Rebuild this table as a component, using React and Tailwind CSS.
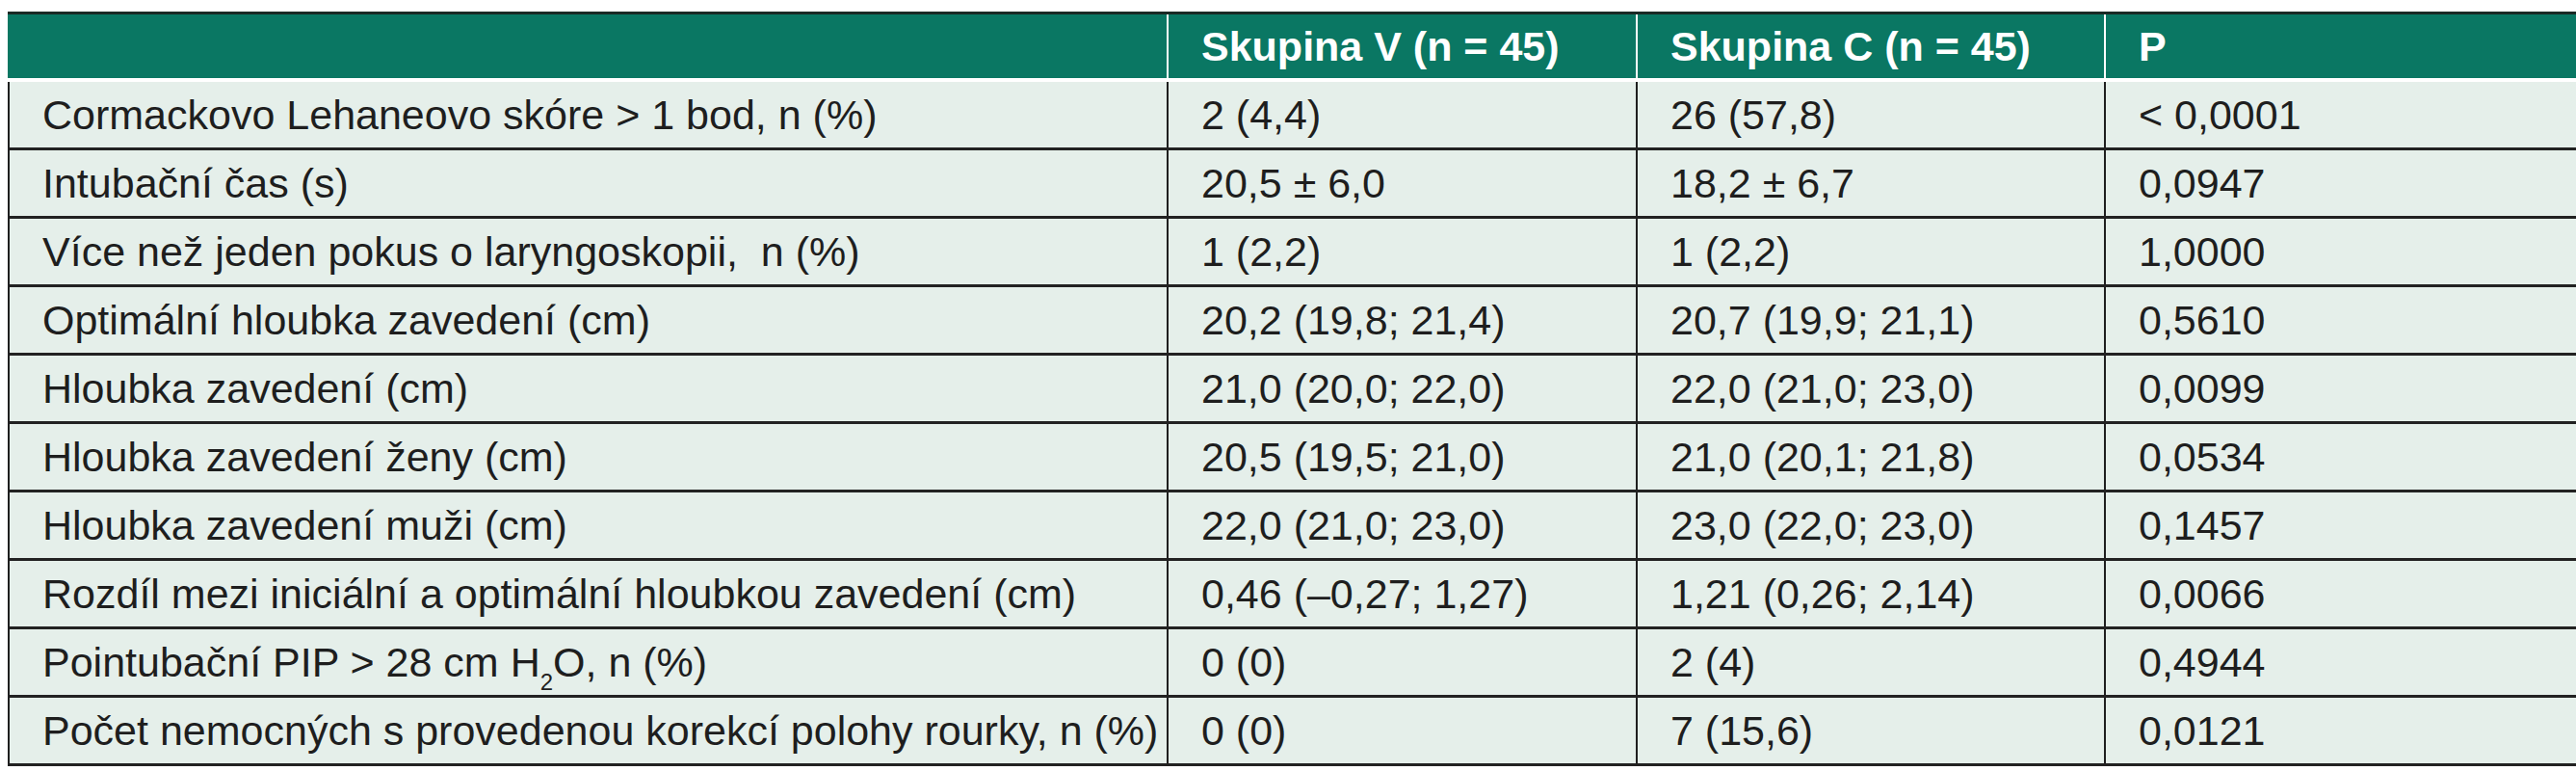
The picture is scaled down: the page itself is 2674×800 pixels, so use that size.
import React from "react";

const rows = [
  ["Cormackovo Lehaneovo skóre > 1 bod, n (%)", "2 (4,4)", "26 (57,8)", "< 0,0001"],
  ["Intubační čas (s)", "20,5 ± 6,0", "18,2 ± 6,7", "0,0947"],
  ["Více než jeden pokus o laryngoskopii,  n (%)", "1 (2,2)", "1 (2,2)", "1,0000"],
  ["Optimální hloubka zavedení (cm)", "20,2 (19,8; 21,4)", "20,7 (19,9; 21,1)", "0,5610"],
  ["Hloubka zavedení (cm)", "21,0 (20,0; 22,0)", "22,0 (21,0; 23,0)", "0,0099"],
  ["Hloubka zavedení ženy (cm)", "20,5 (19,5; 21,0)", "21,0 (20,1; 21,8)", "0,0534"],
  ["Hloubka zavedení muži (cm)", "22,0 (21,0; 23,0)", "23,0 (22,0; 23,0)", "0,1457"],
  ["Rozdíl mezi iniciální a optimální hloubkou zavedení (cm)", "0,46 (–0,27; 1,27)", "1,21 (0,26; 2,14)", "0,0066"],
  [
    <>
      Pointubační PIP &gt; 28 cm H<sub className="text-[24px] align-[-8px]">2</sub>O, n (%)
    </>,
    "0 (0)",
    "2 (4)",
    "0,4944",
  ],
  ["Počet nemocných s provedenou korekcí polohy rourky, n (%)", "0 (0)", "7 (15,6)", "0,0121"],
];

const App = () => {
  return (
    <div
      className="w-[2674px] h-[800px] bg-white pt-[12px] pl-[8px] text-[43px] text-[#1e1e1e]"
      style={{ fontFamily: '"Liberation Sans", Arial, sans-serif' }}
    >
      {/* header */}
      <div className="grid grid-cols-[1205px_487px_486px_1fr] h-[69px] border-t-[3px] border-[#1a2a25] bg-[#0a7763] text-white font-semibold">
        <div className="border-r-2 border-white"></div>
        <div className="border-r-2 border-white flex items-center pl-[34px]">Skupina V (n = 45)</div>
        <div className="border-r-2 border-white flex items-center pl-[34px]">Skupina C (n = 45)</div>
        <div className="flex items-center pl-[34px]">P</div>
      </div>
      <div className="mt-[4px] border-l-2 border-[#1f1f1f] bg-[#e5efea]">
        {rows.map((r, i) => (
          <div
            key={i}
            className="grid grid-cols-[1203px_487px_486px_1fr] h-[71px] border-b-[3px] border-[#222]"
          >
            {r.map((c, j) => (
              <div
                key={j}
                className={
                  "flex items-center pl-[34px] whitespace-pre " +
                  (j < 3 ? "border-r-2 border-[#1f1f1f]" : "")
                }
              >
                <span>{c}</span>
              </div>
            ))}
          </div>
        ))}
      </div>
    </div>
  );
};

export default App;
